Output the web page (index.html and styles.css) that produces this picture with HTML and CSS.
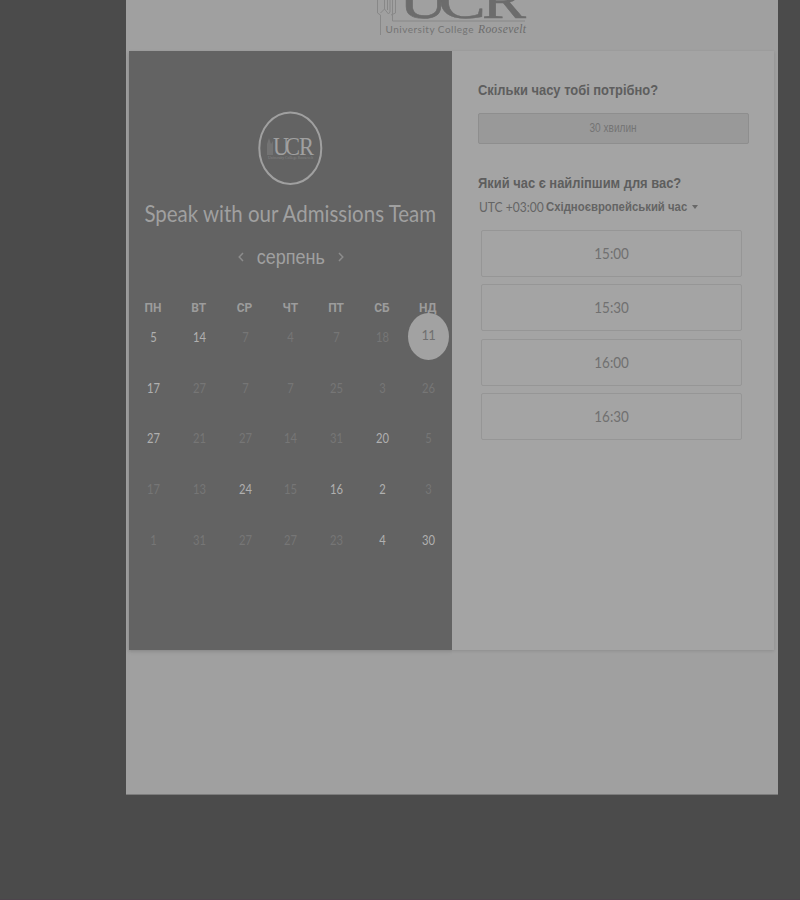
FILE: index.html
```
<!DOCTYPE html>
<html lang="uk">
<head>
<meta charset="utf-8">
<title>Speak with our Admissions Team</title>
<link rel="stylesheet" href="styles.css">
</head>
<body>
<main class="page">
  <header class="brand">
    <svg width="160" height="40" viewBox="372 0 160 40" role="img" aria-label="University College Roosevelt">
      <g class="brand-lines">
        <path d="M377.500 0V13L380.500 15V35M380.500 13L384.500 9V0M384.500 9L388.500 14L390 12V0M392.500 0V21H525M395.500 0V13L391 15M387.500 0V10"/>
      </g>
      <text class="brand-name" y="18"><tspan x="399" textLength="49" lengthAdjust="spacingAndGlyphs">U</tspan><tspan x="438" textLength="48" lengthAdjust="spacingAndGlyphs">C</tspan><tspan x="482" textLength="44" lengthAdjust="spacingAndGlyphs">R</tspan></text>
      <text class="brand-sub" x="385.500" y="33" textLength="88" lengthAdjust="spacing">University College</text>
      <text class="brand-script" x="478" y="33" textLength="48" lengthAdjust="spacing">Roosevelt</text>
    </svg>
  </header>
  <div class="card">
    <section class="calendar">
      <svg class="avatar" width="66" height="76" viewBox="257 110 66 76" role="img" aria-label="UCR">
        <ellipse cx="290.300" cy="148.200" rx="31" ry="35.800"/>
        <path class="avatar-tower" d="M267 155V144L269 138L271 144L273 141V155Z"/>
        <text class="avatar-name" y="155"><tspan x="273" textLength="16" lengthAdjust="spacingAndGlyphs">U</tspan><tspan x="285" textLength="15" lengthAdjust="spacingAndGlyphs">C</tspan><tspan x="299" textLength="15" lengthAdjust="spacingAndGlyphs">R</tspan></text>
        <text class="avatar-sub" x="268" y="159" textLength="45" lengthAdjust="spacingAndGlyphs">University College Roosevelt</text>
      </svg>
      <h1 class="title"><span>Speak with our Admissions Team</span></h1>
      <div class="month">
        <svg width="6" height="10" viewBox="0 0 6 10"><path d="M5 1L1.200 5L5 9"/></svg>
        <span class="month-name"><span>серпень</span></span>
        <svg width="6" height="10" viewBox="0 0 6 10"><path d="M1 1L4.800 5L1 9"/></svg>
      </div>
      <div class="weekdays">
        <span>ПН</span><span>ВТ</span><span>СР</span><span>ЧТ</span><span>ПТ</span><span>СБ</span><span>НД</span>
      </div>
      <div class="days">
        <span class="open">5</span><span class="open">14</span><span>7</span><span>4</span><span>7</span><span>18</span><span class="selected"><b>11</b></span>
        <span class="open">17</span><span>27</span><span>7</span><span>7</span><span>25</span><span>3</span><span>26</span>
        <span class="open">27</span><span>21</span><span>27</span><span>14</span><span>31</span><span class="open">20</span><span>5</span>
        <span>17</span><span>13</span><span class="open">24</span><span>15</span><span class="open">16</span><span class="open">2</span><span>3</span>
        <span>1</span><span>31</span><span>27</span><span>27</span><span>23</span><span class="open">4</span><span class="open">30</span>
      </div>
    </section>
    <section class="booking">
      <h2 class="question"><span>Скільки часу тобі потрібно?</span></h2>
      <div class="duration"><span>30 хвилин</span></div>
      <h2 class="question"><span>Який час є найліпшим для вас?</span></h2>
      <div class="zone"><span class="offset"><span>UTC +03:00</span></span><span class="zone-name"><span>Східноєвропейський час</span></span><i class="caret"></i></div>
      <div class="slots">
        <div class="slot"><span>15:00</span></div>
        <div class="slot"><span>15:30</span></div>
        <div class="slot"><span>16:00</span></div>
        <div class="slot"><span>16:30</span></div>
      </div>
    </section>
  </div>
</main>
</body>
</html>
```
FILE: styles.css
```
* { box-sizing: border-box; }
body {
  margin: 0;
  height: 900px;
  overflow: hidden;
  background: #4b4b4b;
  border-bottom: 1px solid #4d444c;
  font-family: "Liberation Sans", sans-serif;
}
.page {
  width: 652px;
  height: 795px;
  margin-left: 126px;
  padding: 0 4px 0 3px;
  background: #a0a0a0;
  border-bottom: 1px solid #7c7c7c;
}
.brand { height: 51px; padding-left: 243px; }
.brand svg { display: block; }
.brand-lines { fill: none; stroke: #888; stroke-width: 1; }
.brand-name { font: 52px "Liberation Serif", serif; fill: #6c6c6c; stroke: #6c6c6c; stroke-width: .5; }
.brand-sub { font: 10px Lato, sans-serif; fill: #747474; }
.brand-script { font: italic 11.5px "Liberation Serif", serif; fill: #6c6c6c; }

.card {
  display: flex;
  height: 599px;
  background: #a4a4a4;
  box-shadow: 0 1px 3px rgba(0, 0, 0, .12);
}
.calendar {
  width: 323px;
  padding-top: 59px;
  background: #636363;
  box-shadow: 0 2px 5px rgba(0, 0, 0, .06);
  clip-path: inset(0 0 -12px -3px);
}
.avatar { display: block; margin-left: 128px; }
.avatar ellipse { fill: none; stroke: #a0a0a0; stroke-width: 2; }
.avatar-tower { fill: #737373; }
.avatar-name { font: 25px "Liberation Serif", serif; fill: #a0a0a0; }
.avatar-sub { font: 4px "Liberation Serif", serif; fill: #858585; }

.title {
  margin: 13px 0 0;
  height: 30px;
  font: 400 22.5px/30px Lato, sans-serif;
  color: #a0a0a0;
  text-align: center;
  white-space: nowrap;
}
.title span { display: inline-block; transform: scaleX(.91); }
.month {
  display: flex;
  justify-content: center;
  align-items: center;
  height: 30px;
  margin-top: 13px;
}
.month svg { fill: none; stroke: #8c8c8c; stroke-width: 1.5; }
.month-name {
  width: 94px;
  text-align: center;
  font-size: 20px;
  line-height: 30px;
  color: #a0a0a0;
}
.month-name span { display: inline-block; transform: scaleX(.9); }

.weekdays, .days {
  display: grid;
  grid-template-columns: repeat(7, 45.8px);
  margin-left: 1px;
  text-align: center;
}
.weekdays {
  margin-top: 26px;
  font: bold 12px/20px Roboto, sans-serif;
  color: #9c9c9c;
}
.days {
  margin-top: -6px;
  grid-auto-rows: 50.7px;
  font: 14px/50.7px Lato, sans-serif;
  color: #767676;
}
.days > span:not(.selected) { transform: translateX(.5px) scaleX(.8); }
.days .open { color: #b0b0b0; }
.selected { display: flex; justify-content: center; }
.selected b {
  flex: none;
  width: 41px;
  height: 47px;
  margin: 1px 0 0 1px;
  border-radius: 50%;
  background: #a2a2a2;
  color: #707070;
  font-size: 13px;
  font-weight: 400;
  letter-spacing: -.8px;
  line-height: 45px;
}

.booking { width: 322px; padding: 27.500px 0 0 26px; }
.question {
  margin: 0;
  height: 22px;
  font: bold 15.5px/22px "Liberation Sans", sans-serif;
  color: #5e5e5e;
  white-space: nowrap;
}
.question span { display: inline-block; transform-origin: left; transform: scaleX(.833); }
.duration {
  width: 271px;
  height: 31px;
  margin: 12px 0 28px;
  border: 1px solid #8e8e8e;
  border-radius: 2px;
  background: #999;
  color: #747474;
  font: 12px/29px "Liberation Sans", sans-serif;
  text-align: center;
}
.duration span { display: inline-block; transform: scaleX(.84); }
.zone {
  display: flex;
  align-items: center;
  height: 24px;
  margin: 1px 0 0 1px;
  font-size: 12.5px;
  color: #646464;
  white-space: nowrap;
}
.offset { width: 67px; font: 14px Lato, sans-serif; }
.offset span { display: inline-block; transform-origin: left; transform: scaleX(.86); }
.zone-name { width: 146px; font-weight: bold; }
.zone-name span { display: inline-block; transform-origin: left; transform: scaleX(.908); }
.caret {
  border: 3px solid transparent;
  border-top: 4px solid #686868;
  border-bottom: 0;
}
.slots { display: grid; gap: 7.500px; width: 261px; margin: 11px 0 0 3px; }
.slot {
  height: 47px;
  border: 1px solid #969696;
  border-radius: 2px;
  font: 16px/44px Lato, sans-serif;
  color: #707070;
  text-align: center;
}
.slot span { display: inline-block; transform: scaleX(.84); }
```
